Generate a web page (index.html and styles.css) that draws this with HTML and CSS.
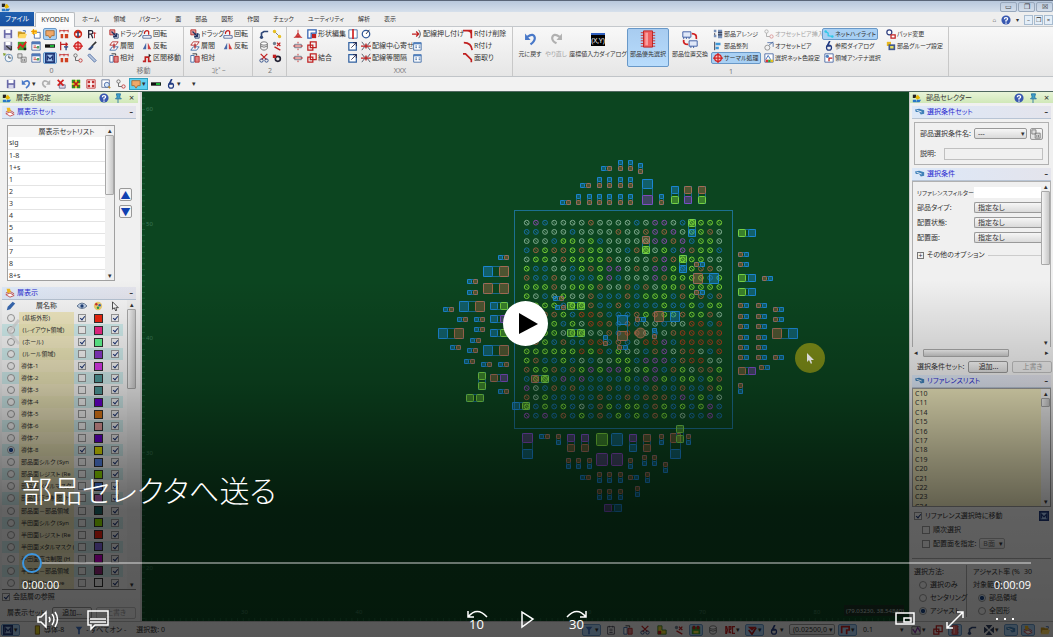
FILE: index.html
```
<!DOCTYPE html>
<html lang="ja">
<head>
    <meta charset="UTF-8">
    <meta name="viewport" content="width=device-width, initial-scale=1.0">
    <title>部品セレクタへ送る</title>
    <link rel="stylesheet" href="styles.css">
</head>
<body>
    <!-- icon sprite -->
    <svg class="sprite">
        <symbol id="i-app" viewBox="0 0 12 12"><path d="M1 2h4v4H1z" fill="#222"/><path d="M4 5l3-3 3 4-4 2z" fill="#e8b800"/><path d="M1 8h4v3H1zM6 8h5l-2 3H5z" fill="#2878c8"/></symbol>
        <symbol id="i-save" viewBox="0 0 12 12"><path d="M1 1h10v10H1z" fill="#6a6aa8"/><path d="M3 1h6v4H3z" fill="#fff"/><path d="M3 7h6v4H3z" fill="#d8d8ec"/></symbol>
        <symbol id="i-savex" viewBox="0 0 12 12"><path d="M1 1h10v10H1z" fill="#8888a8"/><path d="M3 1h6v4H3z" fill="#fff"/><path d="M4 6l6 5M10 6v5" stroke="#333" stroke-width="1.5"/></symbol>
        <symbol id="i-open" viewBox="0 0 12 12"><path d="M1 3h4l1 1h4v6H1z" fill="#c89820"/><path d="M3 6h9l-2 5H1z" fill="#ffd860"/><path d="M7 2h3v2" stroke="#3060b0" fill="none"/></symbol>
        <symbol id="i-new" viewBox="0 0 12 12"><path d="M4 4h7v7H4z" fill="#fff" stroke="#4060a0"/><path d="M1 1h6v5H1z" fill="#ffc830"/><path d="M3 0v7M0 3h7" stroke="#e89000"/></symbol>
        <symbol id="i-callout" viewBox="0 0 12 12"><path d="M1 2h10v6H8l-2 3-2-3H1z" fill="#f0a868" stroke="#a06830"/></symbol>
        <symbol id="i-grid" viewBox="0 0 12 12"><path d="M1 1h10v10H1z" fill="#f0e030"/><path d="M1 1h4v4H1zM7 1h4v4H7zM1 7h4v4H1zM7 7h4v4H7z" fill="#289028"/><path d="M3 3l6 6M9 3L3 9" stroke="#c01818" stroke-width="2"/></symbol>
        <symbol id="i-gridr" viewBox="0 0 12 12"><path d="M1 1h10v10H1z" fill="#fff" stroke="#c03030"/><path d="M2 2h3v3H2zM7 2h3v3H7zM2 7h3v3H2zM7 7h3v3H7z" fill="#c03030"/></symbol>
        <symbol id="i-chart" viewBox="0 0 12 12"><path d="M1 1h10v10H1z" fill="#40a030"/><path d="M1 9l3-5 3 3 4-6" stroke="#e02020" stroke-width="2" fill="none"/><path d="M8 8h3v3H8z" fill="#222"/></symbol>
        <symbol id="i-measure" viewBox="0 0 12 12"><path d="M1 2h10M1 1v3M6 1v3M11 1v3" stroke="#c02020" fill="none"/><path d="M2 6h3v5H2zM7 6h4v5H7z" fill="#d04020"/></symbol>
        <symbol id="i-red" viewBox="0 0 12 12"><circle cx="6" cy="6" r="5" fill="#d02818"/><path d="M3 5h6v3H3z" fill="#fff"/><path d="M5 3h2v7H5z" fill="#384878"/></symbol>
        <symbol id="i-rt" viewBox="0 0 12 12"><path d="M2 11V2h3q2 0 2 2t-2 2H2M5 6l2 5" stroke="#223" stroke-width="1.5" fill="none"/><path d="M9 4v7M7 5h4" stroke="#c02020"/></symbol>
        <symbol id="i-dim" viewBox="0 0 12 12"><path d="M2 1v10M2 4h8M8 2l2 2-2 2" stroke="#c02020" stroke-width="1.5" fill="none"/><path d="M6 7h5M8.500 7v4" stroke="#203878" stroke-width="1.5"/></symbol>
        <symbol id="i-bar" viewBox="0 0 12 12"><path d="M0 4h12v4H0z" fill="#111"/><path d="M6 5h5v2H6z" fill="#20d040"/></symbol>
        <symbol id="i-brush" viewBox="0 0 12 12"><path d="M11 1L6 6" stroke="#333" stroke-width="2"/><path d="M6 5l2 2-4 4-3-1z" fill="#304878"/></symbol>
        <symbol id="i-win" viewBox="0 0 12 12"><path d="M1 1h10v10H1z" fill="#fff" stroke="#4060a0"/><path d="M1 1h10v3H1z" fill="#5078b8"/><path d="M3 6h3M3 8h5" stroke="#c03030"/><path d="M7 6h3v3H7z" fill="#50a060"/></symbol>
        <symbol id="i-m" viewBox="0 0 12 12"><path d="M1 1h10v10H1z" fill="#a8c8f0" stroke="#203878" stroke-width="2"/><path d="M3 9V4l3 3 3-3v5" stroke="#203878" stroke-width="1.5" fill="none"/></symbol>
        <symbol id="i-clock" viewBox="0 0 12 12"><circle cx="7" cy="6" r="4.5" fill="#eef4fa" stroke="#5880a8"/><path d="M7 3v3h3" stroke="#333" fill="none"/><path d="M0 0l4 1-3 3z" fill="#80a030"/></symbol>
        <symbol id="i-gray" viewBox="0 0 12 12"><path d="M1 1h5v5H1zM5 5h6v6H5z" fill="#ddd" stroke="#777"/><path d="M7 7v3M9 7v3" stroke="#777"/></symbol>
        <symbol id="i-link" viewBox="0 0 12 12"><circle cx="3" cy="3" r="2" fill="none" stroke="#666"/><circle cx="9" cy="9" r="2" fill="none" stroke="#c03030"/><path d="M3 5v4h4" fill="none" stroke="#555"/></symbol>
        <symbol id="i-ruler" viewBox="0 0 12 12"><path d="M1 3l2-2 8 8-2 2z" fill="#b8c8e0" stroke="#4868a0"/></symbol>
        <symbol id="i-drag" viewBox="0 0 12 12"><path d="M1 1h6v6H1z" fill="#e8a0a0" stroke="#b02020"/><path d="M6 6h5v5H6z" fill="#fff" stroke="#204070"/><path d="M3 3l6 6M9 5v4H5" stroke="#203060" stroke-width="1.5" fill="none"/></symbol>
        <symbol id="i-layer" viewBox="0 0 12 12"><path d="M4 1h7L8 5H1z" fill="#fff" stroke="#b02020"/><path d="M4 7h7l-3 4H1z" fill="#fff" stroke="#3060a0"/><path d="M6 3v6" stroke="#b02020" stroke-width="1.5"/></symbol>
        <symbol id="i-rel" viewBox="0 0 12 12"><path d="M1 3h4v8H1z" fill="#fff" stroke="#3060a0"/><path d="M6 4h5v7H6z" fill="#e08080" stroke="#b02020"/><path d="M3 1h5v2" stroke="#222" fill="none"/></symbol>
        <symbol id="i-rot" viewBox="0 0 12 12"><path d="M1 8h10v3H1z" fill="#fff" stroke="#405890"/><path d="M3 6a3 3 0 015-3v4" stroke="#c02020" stroke-width="1.5" fill="none"/></symbol>
        <symbol id="i-flip" viewBox="0 0 12 12"><path d="M5 2v8H1z" fill="#4868a8"/><path d="M7 2v8h4z" fill="#d04040"/></symbol>
        <symbol id="i-sect" viewBox="0 0 12 12"><path d="M1 10h3V5h4v5h3" stroke="#c02020" stroke-width="2" fill="none"/><path d="M8 1l3 2-3 2z" fill="#222"/></symbol>
        <symbol id="i-route" viewBox="0 0 12 12"><path d="M3 10V5l3-2h5" stroke="#304878" stroke-width="2" fill="none"/><circle cx="3" cy="10" r="2" fill="#304878"/></symbol>
        <symbol id="i-node" viewBox="0 0 12 12"><path d="M2 2l8 8" stroke="#666"/><circle cx="3" cy="3" r="2" fill="#e8c020"/><circle cx="9" cy="9" r="2" fill="#e8c020"/></symbol>
        <symbol id="i-nodex" viewBox="0 0 12 12"><circle cx="3" cy="3" r="2" fill="#708090"/><path d="M6 2l4 4M10 2L6 6M3 7l7 4" stroke="#c02020" stroke-width="1.5"/></symbol>
        <symbol id="i-cyl" viewBox="0 0 12 12"><ellipse cx="6" cy="3" rx="4" ry="2" fill="#fff" stroke="#666"/><path d="M2 3v6q4 4 8 0V3M2 6q4 3 8 0" fill="none" stroke="#666"/></symbol>
        <symbol id="i-cut" viewBox="0 0 12 12"><path d="M2 1l7 7M10 1L3 8" stroke="#c02020" stroke-width="1.5"/><circle cx="3" cy="9" r="2" fill="none" stroke="#204080"/><circle cx="9" cy="9" r="2" fill="none" stroke="#204080"/></symbol>
        <symbol id="i-turn" viewBox="0 0 12 12"><circle cx="7" cy="7" r="3" fill="none" stroke="#223" stroke-width="2"/><path d="M1 2h4v4H1z" fill="#c02020"/></symbol>
        <symbol id="i-peg" viewBox="0 0 12 12"><path d="M1 10h10M6 1v9M3 9l3-4 3 4z" stroke="#c02020" fill="#d86060"/></symbol>
        <symbol id="i-pin" viewBox="0 0 12 12"><path d="M2 4h8v4H2z" fill="#fff" stroke="#667"/><path d="M6 1v2M6 9v2M0 6h12" stroke="#c02020"/></symbol>
        <symbol id="i-shape" viewBox="0 0 12 12"><path d="M1 1h10v4H5v6H1z" fill="#fff" stroke="#3060b0" stroke-width="1.5"/><path d="M6 6h5v5H6z" fill="#c02020"/></symbol>
        <symbol id="i-sq" viewBox="0 0 12 12"><path d="M4 1h7v7H4zM1 5h6v6H1z" fill="none" stroke="#c02020" stroke-width="1.5"/></symbol>
        <symbol id="i-split" viewBox="0 0 12 12"><path d="M1 1h10v10H1z" fill="#fff" stroke="#3060a0"/><path d="M6 0v12" stroke="#d02020" stroke-width="2"/></symbol>
        <symbol id="i-box" viewBox="0 0 12 12"><path d="M1 2h9v9H1z" fill="#fff" stroke="#3060a0" stroke-width="1.5"/><path d="M4 8l6-6M6 2h4v4" stroke="#224" fill="none"/></symbol>
        <symbol id="i-circ" viewBox="0 0 12 12"><circle cx="6" cy="6" r="4.5" fill="#fff" stroke="#305898" stroke-width="1.5"/><path d="M6 6l4-5" stroke="#223"/></symbol>
        <symbol id="i-squeeze" viewBox="0 0 12 12"><path d="M1 1l3 4h4l3-4M1 11l3-4h4l3 4" stroke="#404858" fill="none"/><path d="M0 6h12M6 3v6" stroke="#c02020" stroke-width="1.5"/></symbol>
        <symbol id="i-push" viewBox="0 0 12 12"><path d="M0 6h7M5 3l3 3-3 3" stroke="#c02020" stroke-width="1.5" fill="none"/><path d="M8 1q4 5 0 10" stroke="#345" fill="none"/></symbol>
        <symbol id="i-cal" viewBox="0 0 12 12"><path d="M2 2h9v9H2z" fill="#fff" stroke="#3060a0"/><path d="M2 2h9v2H2z" fill="#5080c0"/><path d="M4 6h2M8 6h2M4 8h2M8 8h2" stroke="#3060a0"/></symbol>
        <symbol id="i-fil" viewBox="0 0 12 12"><path d="M1 2q9 0 10 9" stroke="#c02020" stroke-width="2" fill="none"/></symbol>
        <symbol id="i-fildel" viewBox="0 0 12 12"><path d="M0 2h10v9M5 2q5 0 5 5" stroke="#c02020" stroke-width="2" fill="none"/></symbol>
        <symbol id="i-cham" viewBox="0 0 12 12"><path d="M0 1h3l7 7v3" stroke="#c02020" stroke-width="2" fill="none"/></symbol>
        <symbol id="i-undo" viewBox="0 0 12 12"><path d="M3 4q6-4 7 1 0 3-4 6" stroke="#4878c8" stroke-width="2" fill="none"/><path d="M1 1v6h5z" fill="#4878c8"/></symbol>
        <symbol id="i-redo" viewBox="0 0 12 12"><path d="M9 4Q3 0 2 5q0 3 4 5" stroke="#b0b0b0" stroke-width="2" fill="none"/><path d="M11 1v6H6z" fill="#b0b0b0"/></symbol>
        <symbol id="i-chip" viewBox="0 0 20 20"><path d="M2 3h16M2 6h16M2 9h16M2 12h16M2 15h16M2 18h16" stroke="#c83030"/><path d="M5 1h10v18H5z" fill="#f06060" stroke="#b82020"/><path d="M7 3h3v14H7z" fill="#f8a0a0"/></symbol>
        <symbol id="i-swap" viewBox="0 0 20 20"><path d="M2 2h9v6H2zM9 12h9v6H9z" fill="#e0e8f8" stroke="#3858a0"/><path d="M3 8v2M6 8v2M9 8v2M11 18v2M14 18v2" stroke="#3858a0"/><path d="M12 4q6 0 5 6M8 16q-6 0-5-5" stroke="#d02020" stroke-width="2" fill="none"/></symbol>
        <symbol id="i-arr" viewBox="0 0 12 12"><path d="M1 1h3v3H1zM1 7h3v3H1zM6 1h5v10H6z" fill="#7890b8"/><path d="M6 4h5M6 7h5M2 5v2" stroke="#223"/></symbol>
        <symbol id="i-align" viewBox="0 0 12 12"><path d="M2 1v10" stroke="#223"/><path d="M3 2h6v3H3zM3 7h4v3H3z" fill="#4098d8"/></symbol>
        <symbol id="i-therm" viewBox="0 0 12 12"><circle cx="6" cy="6" r="4" fill="#f8c0c0" stroke="#d02020" stroke-width="1.5"/><path d="M6 0v12M0 6h12" stroke="#d02020" stroke-width="1.5"/></symbol>
        <symbol id="i-via" viewBox="0 0 12 12"><circle cx="4" cy="8" r="3" fill="none" stroke="#888"/><path d="M4 2h7v5M6 5l5-4" stroke="#4868a0" fill="none"/></symbol>
        <symbol id="i-color" viewBox="0 0 12 12"><path d="M1 1h10v10H1z" fill="#fff" stroke="#4060a0"/><path d="M2 8l3-5 3 5" stroke="#3060b0" fill="none"/><path d="M2 8h3v3H2z" fill="#e03030"/><path d="M5 8h3v3H5z" fill="#30a030"/><path d="M8 8h3v3H8z" fill="#e8c020"/></symbol>
        <symbol id="i-net" viewBox="0 0 12 12"><path d="M2 3l3 2v3l5 1" stroke="#30c8e8" stroke-width="1.5" fill="none"/><circle cx="2" cy="3" r="1.5" fill="#30c8e8"/><circle cx="10" cy="9" r="1.5" fill="#30c8e8"/></symbol>
        <symbol id="i-ref" viewBox="0 0 12 12"><path d="M7 0L4 6h4" stroke="#223a80" stroke-width="2" fill="none"/><circle cx="6" cy="8" r="3" fill="none" stroke="#223a80" stroke-width="1.5"/></symbol>
        <symbol id="i-ant" viewBox="0 0 12 12"><path d="M1 1h10v10H1z" fill="#fff" stroke="#4060a0"/><circle cx="4" cy="4" r="2" fill="#5080c0"/><path d="M6 10V6h4" stroke="#c02020" stroke-width="1.5" fill="none"/></symbol>
        <symbol id="i-pad" viewBox="0 0 12 12"><circle cx="4" cy="4" r="3" fill="#fff" stroke="#304080" stroke-width="1.5"/><path d="M6 7h5v4H6z" fill="#fff" stroke="#c02020" stroke-width="1.5"/></symbol>
        <symbol id="i-group" viewBox="0 0 12 12"><path d="M1 1h5v5H1z" fill="#e8b820"/><path d="M3 4h8v7H3z" fill="#405890"/><path d="M5 6h4v3H5z" fill="#e8e060"/></symbol>
        <symbol id="i-del" viewBox="0 0 12 12"><path d="M4 7h7v4H4z" fill="#dde" stroke="#668"/><path d="M2 1l7 7M9 1L2 8" stroke="#d02020" stroke-width="2"/></symbol>
        <symbol id="i-zoom" viewBox="0 0 12 12"><path d="M1 1h9v9H1z" fill="#fff" stroke="#607090"/><circle cx="7" cy="7" r="3" fill="#d8e8f8" stroke="#4060a0"/><path d="M9 9l2 2" stroke="#c09030" stroke-width="2"/></symbol>
        <symbol id="i-help" viewBox="0 0 12 12"><circle cx="6" cy="6" r="5.5" fill="#3858b0"/><path d="M4 5q0-2 2-2t2 1.500-2 2V8M6 9v1.500" stroke="#fff" stroke-width="1.500" fill="none"/></symbol>
        <symbol id="i-tack" viewBox="0 0 12 12"><path d="M4 1h5l-1 4 2 2H3l2-2zM6 7v5" fill="#40a0c8" stroke="#2070a0"/></symbol>
        <symbol id="i-set" viewBox="0 0 12 12"><path d="M1 8l5-2 5 3-5 2z" fill="#fff" stroke="#c04040"/><path d="M1 6l5-2 5 3" stroke="#c04040" fill="none"/><path d="M2 1h4l1 4-4 1z" fill="#f0b820"/></symbol>
        <symbol id="i-sel" viewBox="0 0 12 12"><path d="M0 3l5-1 6 2v4L7 9 5 6 1 6z" fill="#4080b8"/><path d="M2 4l6 2" stroke="#fff"/></symbol>
        <symbol id="i-pen" viewBox="0 0 12 12"><path d="M8 1l3 2-6 7-4 1 1-4z" fill="#3868b0"/></symbol>
        <symbol id="i-eye" viewBox="0 0 12 12"><path d="M0 6q6-7 12 0-6 6-12 0z" fill="#c8d8ec" stroke="#506888"/><circle cx="6" cy="6" r="2" fill="#204078"/></symbol>
        <symbol id="i-pal" viewBox="0 0 12 12"><circle cx="6" cy="6" r="5" fill="#f0d070"/><circle cx="4" cy="4" r="1.500" fill="#d03030"/><circle cx="8" cy="5" r="1.500" fill="#3060c0"/><circle cx="6" cy="8" r="1.500" fill="#30a040"/></symbol>
        <symbol id="i-cur" viewBox="0 0 12 12"><path d="M3 1v9l2-2 2 4 1-1-1-3h3z" fill="#fff" stroke="#333"/></symbol>
        <symbol id="i-layerm" viewBox="0 0 12 12"><path d="M4 1h5v10H4z" fill="#e0d020" stroke="#806010"/></symbol>
        <symbol id="i-funnel" viewBox="0 0 12 12"><path d="M2 2h8L7 6v5H5V6z" fill="#4070c0"/></symbol>
        <symbol id="i-list" viewBox="0 0 12 12"><path d="M2 2h8v9H2z" fill="#fff" stroke="#445"/><path d="M4 5h4M4 7h4M4 9h4M4 1v2M8 1v2" stroke="#445"/></symbol>
        <symbol id="i-drc" viewBox="0 0 12 12"><path d="M1 2v8h1q2-4 0-8zM5 10V2h2v3L5 6l2 4M12 2H9v8h3" fill="none" stroke="#c02020" stroke-width="1.500"/></symbol>
        <symbol id="i-check" viewBox="0 0 12 12"><path d="M1 2h10L6 7z" fill="#c02020"/><path d="M2 6l4 5 5-8" stroke="#a01818" stroke-width="2" fill="none"/></symbol>
        <symbol id="i-board" viewBox="0 0 12 12"><path d="M1 2h10v9H1z" fill="#40a030"/><path d="M2 1h3v4H2zM7 1h3v4H7z" fill="#c02020"/><path d="M3 7h6v3H3z" fill="#f0e040"/></symbol>
        <symbol id="i-area" viewBox="0 0 12 12"><path d="M1 1h5v5h5v5H1z" fill="#e8d030" stroke="#308030"/><path d="M1 7h4v4H1z" fill="#c02020"/></symbol>
        <symbol id="i-cross" viewBox="0 0 12 12"><path d="M2 0h8L6 5zM2 12h8L6 7zM0 2v8l5-4zM12 2v8L7 6z" fill="#304060"/></symbol>
        <symbol id="i-tee" viewBox="0 0 12 12"><path d="M1 2h10v4H8v5M2 2v8" stroke="#c02020" stroke-width="2" fill="none"/></symbol>
        <symbol id="i-wave" viewBox="0 0 12 12"><path d="M1 2h10v9H1z" fill="#ddd" stroke="#666"/><path d="M2 5l3 4 3-6 3 5" stroke="#8030a0" stroke-width="1.500" fill="none"/></symbol>
    </svg>

    <header class="titlebar">
        <svg class="ic"><use href="#i-app"/></svg>
        <div class="winbtns">
            <button>▭</button><button>❐</button><button>☒</button>
        </div>
    </header>

    <nav class="tabs">
        <a href="#" class="file">ファイル</a>
        <a href="#" class="active">KYODEN</a>
        <a href="#">ホーム</a>
        <a href="#">領域</a>
        <a href="#">パターン</a>
        <a href="#">面</a>
        <a href="#">部品</a>
        <a href="#">図形</a>
        <a href="#">作図</a>
        <a href="#">チェック</a>
        <a href="#">ユーティリティ</a>
        <a href="#">解析</a>
        <a href="#">表示</a>
        <div class="tabs-right">
            <span>⌂</span>
            <svg class="ic"><use href="#i-help"/></svg>
            <span>▾</span>
            <div class="docbtns"><button>–</button><button>❐</button><button>×</button></div>
        </div>
    </nav>

    <section class="ribbon">
        <div class="group">
            <div class="cmds cmds-icons">
                <button class="cmd"><svg class="ic"><use href="#i-save"/></svg></button>
                <button class="cmd"><svg class="ic"><use href="#i-open"/></svg></button>
                <button class="cmd"><svg class="ic"><use href="#i-new"/></svg></button>
                <button class="cmd on"><svg class="ic"><use href="#i-callout"/></svg></button>
                <button class="cmd"><svg class="ic"><use href="#i-measure"/></svg></button>
                <button class="cmd"><svg class="ic"><use href="#i-red"/></svg></button>
                <button class="cmd"><svg class="ic"><use href="#i-rt"/></svg></button>
                <button class="cmd"><svg class="ic"><use href="#i-savex"/></svg></button>
                <button class="cmd"><svg class="ic"><use href="#i-chart"/></svg></button>
                <button class="cmd"><svg class="ic"><use href="#i-win"/></svg></button>
                <button class="cmd"><svg class="ic"><use href="#i-bar"/></svg></button>
                <button class="cmd"><svg class="ic"><use href="#i-dim"/></svg></button>
                <button class="cmd"><svg class="ic"><use href="#i-therm"/></svg></button>
                <button class="cmd"><svg class="ic"><use href="#i-brush"/></svg></button>
                <button class="cmd"><svg class="ic"><use href="#i-clock"/></svg></button>
                <button class="cmd"><svg class="ic"><use href="#i-gray"/></svg></button>
                <button class="cmd"><svg class="ic"><use href="#i-win"/></svg></button>
                <button class="cmd on"><svg class="ic"><use href="#i-m"/></svg></button>
                <button class="cmd"><svg class="ic"><use href="#i-measure"/></svg></button>
                <button class="cmd"><svg class="ic"><use href="#i-link"/></svg></button>
                <button class="cmd"><svg class="ic"><use href="#i-ruler"/></svg></button>
            </div>
            <h6>0</h6>
        </div>
        <div class="group">
            <div class="cmds cmds-move">
                <button class="cmd"><svg class="ic"><use href="#i-drag"/></svg>ドラッグ</button>
                <button class="cmd"><svg class="ic"><use href="#i-rot"/></svg>回転</button>
                <button class="cmd"><svg class="ic"><use href="#i-layer"/></svg>層間</button>
                <button class="cmd"><svg class="ic"><use href="#i-flip"/></svg>反転</button>
                <button class="cmd"><svg class="ic"><use href="#i-rel"/></svg>相対</button>
                <button class="cmd"><svg class="ic"><use href="#i-sect"/></svg>区間移動</button>
            </div>
            <h6>移動</h6>
        </div>
        <div class="group">
            <div class="cmds cmds-copy">
                <button class="cmd"><svg class="ic"><use href="#i-drag"/></svg>ドラッグ</button>
                <button class="cmd"><svg class="ic"><use href="#i-rot"/></svg>回転</button>
                <button class="cmd"><svg class="ic"><use href="#i-layer"/></svg>層間</button>
                <button class="cmd"><svg class="ic"><use href="#i-flip"/></svg>反転</button>
                <button class="cmd"><svg class="ic"><use href="#i-rel"/></svg>相対</button>
            </div>
            <h6>ｺﾋﾟｰ</h6>
        </div>
        <div class="group">
            <div class="cmds cmds-two">
                <button class="cmd"><svg class="ic"><use href="#i-route"/></svg></button>
                <button class="cmd"><svg class="ic"><use href="#i-node"/></svg></button>
                <button class="cmd"><svg class="ic"><use href="#i-cyl"/></svg></button>
                <button class="cmd"><svg class="ic"><use href="#i-nodex"/></svg></button>
                <button class="cmd"><svg class="ic"><use href="#i-cut"/></svg></button>
                <button class="cmd"><svg class="ic"><use href="#i-turn"/></svg></button>
            </div>
            <h6>2</h6>
        </div>
        <div class="group">
            <div class="cmds cmds-xxx">
                <button class="cmd"><svg class="ic"><use href="#i-peg"/></svg></button>
                <button class="cmd"><svg class="ic"><use href="#i-shape"/></svg>形状編集</button>
                <button class="cmd"><svg class="ic"><use href="#i-split"/></svg></button>
                <button class="cmd"><svg class="ic"><use href="#i-circ"/></svg></button>
                <button class="cmd"><svg class="ic"><use href="#i-push"/></svg>配線押し付け</button>
                <button class="cmd"><svg class="ic"><use href="#i-fildel"/></svg>R付け削除</button>
                <button class="cmd"><svg class="ic"><use href="#i-pin"/></svg></button>
                <button class="cmd"><svg class="ic"><use href="#i-sq"/></svg></button>
                <button class="cmd"><svg class="ic"><use href="#i-box"/></svg></button>
                <button class="cmd"><svg class="ic"><use href="#i-squeeze"/></svg>配線中心寄せ</button>
                <button class="cmd"><svg class="ic"><use href="#i-cal"/></svg></button>
                <button class="cmd"><svg class="ic"><use href="#i-fil"/></svg>R付け</button>
                <button class="cmd"><svg class="ic"><use href="#i-pin"/></svg></button>
                <button class="cmd"><svg class="ic"><use href="#i-sq"/></svg>結合</button>
                <button class="cmd"><svg class="ic"><use href="#i-box"/></svg></button>
                <button class="cmd"><svg class="ic"><use href="#i-squeeze"/></svg>配線等間隔</button>
                <button class="cmd"><svg class="ic"><use href="#i-cal"/></svg></button>
                <button class="cmd"><svg class="ic"><use href="#i-cham"/></svg>面取り</button>
            </div>
            <h6>XXX</h6>
        </div>
        <div class="group">
            <div class="bigrow">
                <button class="big"><svg><use href="#i-undo"/></svg>元に戻す</button>
                <button class="big dim"><svg><use href="#i-redo"/></svg>やり直し</button>
                <button class="big wide"><span class="xy">(X,Y)</span>座標値入力ダイアログ</button>
                <button class="big part on"><svg class="lg"><use href="#i-chip"/></svg>部品優先選択</button>
                <button class="big part"><svg class="lg"><use href="#i-swap"/></svg>部品位置交換</button>
                <div class="cmds cmds-parts">
                    <button class="cmd"><svg class="ic"><use href="#i-arr"/></svg>部品アレンジ</button>
                    <button class="cmd dim"><svg class="ic"><use href="#i-link"/></svg>オフセットビア挿入</button>
                    <button class="cmd on"><svg class="ic"><use href="#i-net"/></svg>ネットハイライト</button>
                    <button class="cmd"><svg class="ic"><use href="#i-pad"/></svg>パッド変更</button>
                    <button class="cmd"><svg class="ic"><use href="#i-align"/></svg>部品整列</button>
                    <button class="cmd"><svg class="ic"><use href="#i-via"/></svg>オフセットビア</button>
                    <button class="cmd"><svg class="ic"><use href="#i-ref"/></svg>参照ダイアログ</button>
                    <button class="cmd"><svg class="ic"><use href="#i-group"/></svg>部品グループ設定</button>
                    <button class="cmd on"><svg class="ic"><use href="#i-therm"/></svg>サーマル処理</button>
                    <button class="cmd"><svg class="ic"><use href="#i-color"/></svg>選択ネット色設定</button>
                    <button class="cmd"><svg class="ic"><use href="#i-ant"/></svg>領域アンテナ選択</button>
                </div>
            </div>
            <h6>1</h6>
        </div>
    </section>

    <div class="quickbar">
        <button class="cmd"><svg class="ic"><use href="#i-save"/></svg></button>
        <button class="cmd"><svg class="ic"><use href="#i-undo"/></svg>▾</button>
        <button class="cmd"><svg class="ic"><use href="#i-redo"/></svg></button>
        <button class="cmd"><svg class="ic"><use href="#i-del"/></svg></button>
        <button class="cmd"><svg class="ic"><use href="#i-grid"/></svg></button>
        <button class="cmd"><svg class="ic"><use href="#i-gridr"/></svg></button>
        <button class="cmd"><svg class="ic"><use href="#i-zoom"/></svg></button>
        <button class="cmd"><svg class="ic"><use href="#i-link"/></svg></button>
        <button class="cmd hot"><svg class="ic"><use href="#i-callout"/></svg>▾</button>
        <button class="cmd"><svg class="ic"><use href="#i-bar"/></svg></button>
        <button class="cmd"><svg class="ic"><use href="#i-ref"/></svg>▾</button>
        <button class="cmd more">▾</button>
    </div>

    <main class="work">
        <aside class="panel panel-left">
            <div class="dock"><svg class="ic"><use href="#i-app"/></svg><span>層表示設定</span><svg class="ic"><use href="#i-help"/></svg><svg class="ic"><use href="#i-tack"/></svg><button>×</button></div>
            <h5><svg class="ic"><use href="#i-set"/></svg>層表示セット<b>–</b></h5>
            <div class="setrow">
                <div class="setlist">
                    <table>
                        <thead><tr><th>層表示セットリスト</th></tr></thead>
                        <tbody>
                            <tr><td>sig</td></tr>
                            <tr><td>1-8</td></tr>
                            <tr><td>1+s</td></tr>
                            <tr><td>1</td></tr>
                            <tr><td>2</td></tr>
                            <tr><td>3</td></tr>
                            <tr><td>4</td></tr>
                            <tr><td>5</td></tr>
                            <tr><td>6</td></tr>
                            <tr><td>7</td></tr>
                            <tr><td>8</td></tr>
                            <tr><td>8+s</td></tr>
                        </tbody>
                    </table>
                    <div class="vbar"><i class="mid"></i></div>
                </div>
                <div class="updown"><button>▲</button><button>▼</button></div>
            </div>
            <h5><svg class="ic"><use href="#i-set"/></svg>層表示<b>–</b></h5>
            <div class="layerbox">
                <table class="layers">
                    <thead>
                        <tr>
                            <th><svg class="ic"><use href="#i-pen"/></svg></th>
                            <th>層名称</th>
                            <th><svg class="ic"><use href="#i-eye"/></svg></th>
                            <th><svg class="ic"><use href="#i-pal"/></svg></th>
                            <th><svg class="ic"><use href="#i-cur"/></svg></th>
                        </tr>
                    </thead>
                    <tbody id="layers"></tbody>
                </table>
                <div class="vbar"><i class="short"></i></div>
            </div>
            <label class="line"><input type="checkbox" checked>会話層の参照</label>
            <div class="btnrow"><span>層表示セット:</span><button>追加...</button><button disabled>上書き</button></div>
        </aside>

        <svg class="board" id="board" viewBox="142 92 767 529" preserveAspectRatio="xMidYMid slice"></svg>

        <aside class="panel panel-right">
            <div class="dock"><svg class="ic"><use href="#i-app"/></svg><span>部品セレクター</span><svg class="ic"><use href="#i-help"/></svg><svg class="ic"><use href="#i-tack"/></svg><button>×</button></div>
            <h5><svg class="ic"><use href="#i-sel"/></svg>選択条件セット<b>–</b></h5>
            <div class="condset">
                <label for="cond">部品選択条件名:</label>
                <span class="drop"><select id="cond"><option>---</option></select></span>
                <button><svg class="ic"><use href="#i-gray"/></svg></button>
                <label for="desc">説明:</label>
                <input type="text" id="desc" disabled>
            </div>
            <h5><svg class="ic"><use href="#i-sel"/></svg>選択条件<b>–</b></h5>
            <div class="condbox">
                <div class="conds">
                    <label for="flt" class="long">リファレンスフィルター:</label><input type="text" id="flt">
                    <label for="ptype">部品タイプ:</label><select id="ptype"><option>指定なし</option></select>
                    <label for="pstate">配置状態:</label><select id="pstate"><option>指定なし</option></select>
                    <label for="pside">配置面:</label><select id="pside"><option>指定なし</option></select>
                    <div class="opts"><span class="plus">+</span>その他のオプション</div>
                </div>
                <div class="vbar"><i class="half"></i></div>
            </div>
            <div class="hbar"><i></i></div>
            <div class="btnrow"><span>選択条件セット:</span><button>追加...</button><button disabled>上書き</button></div>
            <h5><svg class="ic"><use href="#i-sel"/></svg>リファレンスリスト<b>–</b></h5>
            <div class="reflist">
                <ul>
                    <li>C10</li>
                    <li>C11</li>
                    <li>C14</li>
                    <li>C15</li>
                    <li>C16</li>
                    <li>C17</li>
                    <li>C18</li>
                    <li>C19</li>
                    <li>C20</li>
                    <li>C21</li>
                    <li>C22</li>
                    <li>C23</li>
                    <li>C24</li>
                </ul>
                <div class="vbar"><i class="tiny"></i></div>
            </div>
            <div class="checks">
                <label class="line"><input type="checkbox" checked>リファレンス選択時に移動<svg class="ic"><use href="#i-m"/></svg></label>
                <label class="line in"><input type="checkbox">順次選択</label>
                <div class="line in"><label class="line"><input type="checkbox">配置面を指定:</label><span class="drop"><select disabled aria-label="配置面"><option>B面</option></select></span></div>
            </div>
            <div class="methods">
                <div>
                    <p>選択方法:</p>
                    <label class="line"><input type="radio" name="m">選択のみ</label>
                    <label class="line"><input type="radio" name="m">センタリング</label>
                    <label class="line"><input type="radio" name="m" checked>アジャスト</label>
                </div>
                <div>
                    <p class="rate"><label for="rate">アジャスト率 (%</label><input type="text" id="rate" value="30"></p>
                    <p>対象範囲:</p>
                    <label class="line"><input type="radio" name="r" checked>部品領域</label>
                    <label class="line"><input type="radio" name="r">全図形</label>
                </div>
            </div>
        </aside>
    </main>

    <footer class="status">
        <button class="cmd on"><svg class="ic"><use href="#i-m"/></svg>▾</button>
        <span class="cur"><svg class="ic"><use href="#i-layerm"/></svg>導体-8</span>
        <span><svg class="ic"><use href="#i-funnel"/></svg>- すべてオン -</span>
        <span>選択数: 0</span>
        <div class="tools">
            <button class="cmd on"><svg class="ic"><use href="#i-funnel"/></svg>▾</button>
            <button class="cmd"><svg class="ic"><use href="#i-list"/></svg></button>
            <button class="cmd"><svg class="ic"><use href="#i-rel"/></svg></button>
            <button class="cmd"><svg class="ic"><use href="#i-cut"/></svg></button>
            <button class="cmd"><svg class="ic"><use href="#i-area"/></svg></button>
            <button class="cmd"><svg class="ic"><use href="#i-nodex"/></svg></button>
            <button class="cmd on"><svg class="ic"><use href="#i-board"/></svg></button>
            <button class="cmd"><svg class="ic"><use href="#i-cyl"/></svg></button>
            <button class="cmd"><svg class="ic"><use href="#i-drc"/></svg>▾</button>
            <button class="cmd on"><svg class="ic"><use href="#i-check"/></svg>▾</button>
            <button class="cmd"><svg class="ic"><use href="#i-ref"/></svg>▾</button>
            <span class="drop"><select aria-label="グリッド"><option>(0.02500,0</option></select></span>
            <button class="cmd on"><svg class="ic"><use href="#i-tee"/></svg>▾</button>
            <span class="drop"><select class="flat" aria-label="線幅"><option>0.1</option></select></span>
            <button class="cmd"><svg class="ic"><use href="#i-wave"/></svg>▾</button>
            <button class="cmd"><svg class="ic"><use href="#i-sq"/></svg></button>
            <button class="cmd on"><svg class="ic"><use href="#i-chip"/></svg></button>
            <button class="cmd"><svg class="ic"><use href="#i-route"/></svg></button>
            <button class="cmd"><svg class="ic"><use href="#i-cross"/></svg>▾</button>
            <button class="cmd on"><svg class="ic"><use href="#i-sel"/></svg></button>
            <button class="cmd on"><svg class="ic"><use href="#i-set"/></svg></button>
            <button class="cmd"><svg class="ic"><use href="#i-open"/></svg></button>
        </div>
    </footer>

    <!-- video player controls over the recording -->
    <div class="player">
        <svg class="prev" viewBox="0 0 14 26"><path d="M12 1L2 13l10 12"/></svg>
        <button class="bigplay" aria-label="再生"><svg viewBox="0 0 45 45"><path d="M16 12v21l19-10z"/></svg></button>
        <h1>部品セレクタへ送る</h1>
        <input type="range" class="seek" min="0" max="9" value="0" aria-label="再生位置">
        <div class="times"><span>0:00:00</span><span>0:00:09</span></div>
        <div class="controls">
            <div class="side">
                <button aria-label="音量"><svg viewBox="0 0 24 24"><path d="M2 9h3l5-5v15l-5-5H2zM13 9q2 3 0 5M16 6q4 5 0 11M19 4q5 7 0 15"/></svg></button>
                <button aria-label="字幕"><svg viewBox="0 0 24 24"><path d="M2 3h20v14H9l-4 4v-4H2zM4 11h16M4 14h16"/></svg></button>
            </div>
            <div class="side">
                <button class="skip"><svg viewBox="0 0 24 9"><path d="M3 8q9-11 19 0M3 2v6h6"/></svg>10</button>
                <button aria-label="再生"><svg viewBox="0 0 24 24"><path d="M7 4v15l11-8z"/></svg></button>
                <button class="skip"><svg viewBox="0 0 24 9"><path d="M2 8q10-11 19 0M21 2v6h-6"/></svg>30</button>
            </div>
            <div class="side end">
                <button aria-label="ミニ表示"><svg viewBox="0 0 24 24"><path d="M3 5h18v11H3zM11 10h7v4h-7z"/></svg></button>
                <button aria-label="全画面"><svg viewBox="0 0 24 24"><path d="M4 20L20 4M14 4h6v6M4 14v6h6"/></svg></button>
                <button aria-label="その他"><svg viewBox="0 0 24 24"><path class="dots" d="M3 11h2M11 11h2M19 11h2"/></svg></button>
            </div>
        </div>
    </div>

    <script src="script.js"></script>
</body>
</html>
```
FILE: styles.css
```
* {
    box-sizing: border-box;
}
body {
    position: relative;
    display: flex;
    flex-direction: column;
    min-height: 100vh;
    margin: 0;
    overflow: hidden;
    background: #efefef;
    color: #333;
    font: 7px/12px "Noto Sans", "Noto Sans CJK JP", sans-serif;
    font-feature-settings: "palt";
    white-space: nowrap;
}
button, input, select {
    margin: 0;
    padding: 0;
    border: 0;
    background: none;
    color: inherit;
    font: inherit;
    font-feature-settings: inherit;
    border-radius: 0;
}
h1, h5, h6, p, ul {
    margin: 0;
    padding: 0;
    font-weight: normal;
    font-size: inherit;
    list-style: none;
}
table {
    border-collapse: collapse;
    width: 100%;
}
th, td {
    padding: 0;
    font-weight: normal;
}
.sprite {
    position: absolute;
    width: 0;
    height: 0;
}
.ic {
    width: 10px;
    height: 10px;
    flex: none;
    display: block;
}

/* title bar and tabs */
.titlebar {
    display: flex;
    justify-content: space-between;
    align-items: center;
    height: 12px;
    padding-left: 1px;
    border-top: 1px solid #5a6678;
    background: linear-gradient(#b8c8dc, #d6e0ec);
}
.winbtns, .docbtns {
    display: flex;
    gap: 1px;
}
.winbtns button {
    width: 17px;
    height: 10px;
    border: 1px solid #98a8bc;
    border-radius: 2px;
    line-height: 8px;
}
.tabs {
    display: flex;
    align-items: flex-end;
    height: 15px;
    border-bottom: 1px solid #c4c8cc;
    background: #eeeeee;
    font-size: 6px;
}
.tabs a {
    padding: 0 7px;
    line-height: 14px;
    color: #333;
    text-decoration: none;
}
.tabs .file {
    padding: 0 5px;
    margin-right: 1px;
    background: linear-gradient(#2060b0, #1850a0);
    color: #fff;
    font-size: 7px;
}
.tabs .active {
    padding: 0 5px;
    margin-bottom: -1px;
    border: 1px solid #b8bcc0;
    border-bottom: 0;
    border-radius: 2px 2px 0 0;
    background: #fbfbfb;
    font-size: 7px;
}
.tabs-right {
    display: flex;
    align-items: center;
    gap: 5px;
    margin-left: auto;
}
.docbtns button {
    width: 9px;
    height: 10px;
    border: 1px solid #a8bcd0;
    background: #e4eef8;
    line-height: 8px;
}

/* ribbon */
.ribbon {
    display: flex;
    height: 50px;
    border-bottom: 1px solid #c0c4c8;
    background: linear-gradient(#f8f8f8, #e6e6e6);
    font-size: 6px;
}
.group {
    display: flex;
    flex-direction: column;
    justify-content: space-between;
    padding: 1px 3px 0 4px;
    border-right: 1px solid #c8c8c8;
}
.group h6 {
    text-align: center;
    line-height: 10px;
    font-size: 7px;
    color: #777;
}
.cmds {
    display: grid;
    grid-auto-rows: 12px;
}
.cmds-icons { grid-template-columns: repeat(7, 14px); margin-left: -3px; }
.cmds-move { grid-template-columns: 33px 40px; }
.cmds-copy { grid-template-columns: 33px 28px; }
.cmds-two { grid-template-columns: 13px 13px; }
.cmds-xxx { grid-template-columns: 14px 41px 13px 51px 51px 48px; }
.cmds-parts { grid-template-columns: 51px 60px 62px 61px; }
.cmds-move, .cmds-copy, .cmds-xxx {
    font-size: 7px;
}
.cmd {
    display: flex;
    align-items: center;
    justify-self: start;
    gap: 1px;
    height: 12px;
    padding: 0 1px;
    border: 1px solid transparent;
}
.cmd.on {
    border-color: #6898c8;
    border-radius: 2px;
    background: #a8d0f4;
}
.dim {
    color: #a4a4a4;
}
.dim .ic {
    opacity: 0.5;
}
.bigrow {
    display: flex;
}
.big {
    display: flex;
    flex-direction: column;
    align-items: center;
    width: 26px;
    height: 39px;
    border: 1px solid transparent;
}
.big svg {
    width: 13px;
    height: 18px;
    margin-top: 1px;
}
.big svg.lg {
    width: 20px;
}
.big.wide {
    width: 58px;
}
.big.part {
    width: 42px;
}
.big.on {
    border-color: #6898c8;
    border-radius: 2px;
    background: linear-gradient(#a8ccf0, #b8dcfc);
}
.xy {
    margin: 4px 0 2px;
    border-top: 2px solid #3060c0;
    background: #000;
    color: #fff;
    font-size: 7px;
    line-height: 11px;
}
.quickbar {
    display: flex;
    align-items: center;
    gap: 1px;
    height: 15px;
    padding-left: 4px;
    border-bottom: 1px solid #506860;
    background: #f2f2f2;
}
.cmd.hot {
    border-color: #30a0c0;
    background: #60d0f0;
}
.more {
    margin-left: 6px;
}

/* work area */
.work {
    flex: 1;
    display: flex;
    height: 529px;
    min-height: 0;
}
.board {
    flex: 1;
    min-width: 0;
    height: 100%;
    background: #0c4520;
}
.panel {
    display: flex;
    flex-direction: column;
    flex: none;
    padding: 0 2px;
    background: #f0f0f0;
}
.panel-left {
    width: 142px;
    padding-right: 4px;
    border-right: 2px solid #d8d8d8;
}
.panel-right {
    width: 144px;
    border-left: 1px solid #ccc;
}
.dock {
    display: flex;
    align-items: center;
    gap: 4px;
    height: 11px;
    margin: 0 -2px 3px;
    padding: 0 2px;
    background: linear-gradient(#e8f4d8, #d0e8b8);
}
.dock span {
    flex: 1;
}
.dock button {
    width: 9px;
    font-size: 9px;
    line-height: 9px;
}
h5 {
    display: flex;
    align-items: center;
    gap: 2px;
    height: 13px;
    flex: none;
    padding: 0 3px;
    border-bottom: 1px solid #b8c4d4;
    background: linear-gradient(90deg, #dce8f8, #e4e4ec);
    color: #2828d0;
}
h5 b {
    margin-left: auto;
    color: #222;
}
.setrow {
    display: flex;
    align-items: center;
    gap: 4px;
    padding: 6px 4px 6px 5px;
}
.setlist {
    display: flex;
    flex: 1;
    height: 156px;
    border: 1px solid #a0a0a0;
    background: #fff;
    overflow: hidden;
}
.setlist th {
    height: 11px;
    line-height: 11px;
    padding-left: 20px;
    background: #f4f4f4;
}
.setlist td {
    height: 12px;
    line-height: 11px;
    padding-left: 1px;
    border-bottom: 1px solid #e4e4e4;
}
.updown {
    display: flex;
    flex-direction: column;
    gap: 4px;
}
.updown button {
    width: 13px;
    height: 13px;
    border: 1px solid #999;
    border-radius: 2px;
    background: #f4f4f4;
    color: #1040b0;
    font-size: 10px;
    line-height: 10px;
}
.vbar {
    display: flex;
    flex-direction: column;
    flex: none;
    width: 9px;
    background: #f0f0f0;
    text-align: center;
    line-height: 9px;
}
.vbar::before, .hbar::before {
    content: "▴";
}
.vbar::after, .hbar::after {
    content: "▾";
}
.vbar::after {
    margin-top: auto;
}
.vbar i, .hbar i {
    border: 1px solid #a8a8a8;
    border-radius: 1px;
    background: linear-gradient(90deg, #f4f4f4, #c8c8c8);
}
.mid { height: 60px; }
.short { height: 80px; }
.half { height: 74px; }
.tiny { height: 9px; }
.hbar {
    display: flex;
    align-items: center;
    height: 11px;
    padding: 0 2px;
}
.hbar::before { content: "◂"; }
.hbar::after { content: "▸"; margin-left: auto; }
.hbar i {
    width: 86px;
    height: 8px;
    margin-left: 5px;
    background: linear-gradient(#f4f4f4, #c8c8c8);
}
.layerbox {
    display: flex;
    gap: 4px;
    height: 290px;
    border-bottom: 1px solid #888;
    background: #f6f6f6;
    overflow: hidden;
}
.layers {
    flex: 1;
    table-layout: fixed;
}
.layers th {
    height: 12px;
    line-height: 12px;
}
.layers th .ic {
    margin: 0 auto;
}
.layers th:nth-child(1) { width: 17px; }
.layers th:nth-child(2) { width: 55px; }
.layers td {
    height: 12px;
    line-height: 10px;
    text-align: center;
    font-size: 6px;
}
.layers td:nth-child(2) {
    padding-left: 2px;
    background: #f0e8c0;
    overflow: hidden;
    text-align: left;
    white-space: pre;
}
.layers tbody tr:nth-child(even) {
    background: #d0ecec;
}
.layers tbody tr:nth-child(even) td:nth-child(2) {
    background: #ece6b8;
}
.layers input {
    display: block;
    margin: 0 auto;
}
.swatch {
    display: block;
    width: 9px;
    height: 9px;
    margin: 0 auto;
    border: 1px solid #333;
}
input[type=checkbox], input[type=radio] {
    appearance: none;
    position: relative;
    flex: none;
    width: 8px;
    height: 8px;
    border: 1px solid #9a9a9a;
    background: #f4f4f4;
}
input[type=radio] {
    border-radius: 50%;
}
input[type=checkbox]:checked::after {
    content: "";
    position: absolute;
    left: 2px;
    top: 0;
    width: 2px;
    height: 4px;
    border: solid #203878;
    border-width: 0 1px 1px 0;
    transform: rotate(40deg);
}
input[type=radio]:checked {
    background: radial-gradient(#204888 45%, #e0f0ff 55%);
}
.line {
    display: flex;
    align-items: center;
    gap: 3px;
    height: 14px;
}
.line > .ic {
    margin-left: auto;
}
.btnrow {
    display: grid;
    grid-template-columns: 1fr 40px 40px;
    align-items: center;
    gap: 4px;
    height: 17px;
    padding-left: 5px;
}
.btnrow button, .condset button {
    height: 12px;
    border: 1px solid #999;
    border-radius: 2px;
    background: linear-gradient(#f8f8f8, #dcdcdc);
    line-height: 10px;
}
.btnrow button:disabled {
    border-color: #c0c0c0;
    background: #eeeeee;
    color: #999;
}
select {
    appearance: none;
    width: 100%;
    height: 11px;
    padding-left: 3px;
    border: 1px solid #999;
    border-radius: 2px;
    background: linear-gradient(#f6f6f6, #dadada);
    line-height: 9px;
}
.drop {
    position: relative;
}
.drop::after {
    content: "▾";
    position: absolute;
    right: 2px;
    top: 0;
}
.condset {
    display: grid;
    grid-template-columns: auto 1fr 13px;
    align-items: center;
    gap: 3px;
    margin: 3px 2px;
    padding: 2px 5px;
    border: 1px solid #b0b0b0;
    height: 43px;
}
.condset input {
    grid-column: 2 / 4;
    height: 12px;
    margin-left: -30px;
    border: 1px solid #c0c0c0;
}
.condbox {
    display: flex;
    height: 166px;
    border: 1px solid #b0b0b0;
    border-bottom: 0;
}
.conds {
    flex: 1;
    min-width: 0;
    display: grid;
    grid-template-columns: 57px minmax(0, 1fr);
    grid-auto-rows: 15px;
    align-items: center;
    padding: 3px 0 0 4px;
}
.conds input {
    width: 100%;
    height: 11px;
    background: #fff;
}
.conds select {
    border-right: 0;
    border-radius: 2px 0 0 2px;
}
.conds .long {
    font-size: 6px;
}
.opts {
    grid-column: 1 / 3;
    display: flex;
    align-items: center;
    gap: 3px;
    margin-top: 5px;
}
.opts::after {
    content: "";
    flex: 1;
    border-top: 1px solid #ccc;
}
.plus {
    width: 7px;
    height: 7px;
    border: 1px solid #777;
    line-height: 5px;
    text-align: center;
}
.reflist {
    display: flex;
    height: 119px;
    border: 1px solid #999;
    background: #f2ecc0;
    overflow: hidden;
}
.reflist ul {
    display: flex;
    flex-direction: column;
    flex: 1;
    height: 122px;
    padding-left: 2px;
}
.reflist li {
    flex: 1;
    line-height: 9px;
}
.checks {
    padding: 2px 2px 7px;
    border-bottom: 1px solid #aaa;
}
.checks .line {
    height: 14px;
}
.in {
    padding-left: 8px;
}
.in .in, .in .line {
    padding-left: 0;
}
.in .drop {
    width: 26px;
}
.methods {
    display: grid;
    grid-template-columns: 55px 1fr;
    gap: 4px;
    padding-top: 6px;
    line-height: 13px;
}
.methods > div:first-child {
    border-right: 1px solid #aaa;
}
.methods > div {
    padding-left: 2px;
}
.methods .line {
    height: 13px;
    padding-left: 5px;
}
.rate {
    display: flex;
    gap: 4px;
}
.rate input {
    width: 26px;
}

/* status bar */
.status {
    display: flex;
    align-items: center;
    gap: 10px;
    height: 16px;
    padding: 0 1px;
    border-top: 1px solid #bbb;
    background: #efefef;
}
.status span {
    display: flex;
    align-items: center;
    gap: 2px;
}
.status .cur {
    margin-left: 2px;
}
.tools {
    display: flex;
    align-items: center;
    gap: 3px;
    margin-left: auto;
}
.tools .drop {
    width: 46px;
}
.tools .flat {
    border: 0;
    background: none;
}

/* player */
.player {
    position: absolute;
    inset: 0;
    display: flex;
    flex-direction: column;
    justify-content: flex-end;
    padding: 0 22px 5px;
    background: linear-gradient(transparent 44%, rgba(0,0,0,0.2) 60%, rgba(0,0,0,0.45) 72%, rgba(0,0,0,0.6) 80%, rgba(0,0,0,0.64));
    color: #fff;
}
.player svg {
    fill: none;
    stroke: #fff;
    stroke-width: 1.5;
}
.player .prev {
    position: absolute;
    left: 7px;
    top: 50%;
    width: 14px;
    height: 26px;
    stroke: rgba(190,190,190,0.7);
    stroke-width: 3;
}
.bigplay {
    position: absolute;
    left: calc(50% - 24px);
    top: calc(50% - 18px);
    width: 45px;
    height: 45px;
    border-radius: 50%;
    background: #fff;
}
.player .bigplay svg {
    display: block;
    fill: #000;
    stroke: none;
}
.player h1 {
    font: 300 30px/40px "Noto Sans CJK JP", sans-serif;
    font-feature-settings: "palt";
}
.seek {
    appearance: none;
    width: 100%;
    height: 20px;
    margin-top: 44px;
}
.seek::-webkit-slider-runnable-track {
    height: 2px;
    background: linear-gradient(90deg, transparent 20px, rgba(255,255,255,0.4) 20px);
}
.seek::-webkit-slider-thumb {
    appearance: none;
    width: 20px;
    height: 20px;
    margin-top: -9px;
    border: 2px solid #3c96e0;
    border-radius: 50%;
}
.times {
    display: flex;
    justify-content: space-between;
    margin-top: 5px;
    font: 11px/14px "Open Sans", sans-serif;
}
.controls {
    display: grid;
    grid-template-columns: 1fr auto 1fr;
    margin-top: 16px;
    padding: 0 14px;
}
.side {
    display: flex;
    gap: 26px;
}
.end {
    justify-content: flex-end;
}
.controls button {
    width: 24px;
    height: 24px;
}
.controls svg {
    display: block;
    width: 24px;
    height: 24px;
}
.controls .skip {
    font: 13px/13px "Open Sans", sans-serif;
}
.controls .skip svg {
    height: 9px;
}
.controls .dots {
    stroke-width: 2;
}
```
FILE: script.js
```
const NS = 'http://www.w3.org/2000/svg';
const board = document.getElementById('board');

function add(tag, attrs, text) {
    const el = document.createElementNS(NS, tag);
    for (const k in attrs) el.setAttribute(k, attrs[k]);
    if (text) el.textContent = text;
    board.appendChild(el);
    return el;
}

const colors = { w: '#7ca88c', p: '#8448a8', b: '#186ca0', g: '#74cc34', o: '#986040', r: '#a03c1c' };

// rulers, 10 mm = 114.5 units
let ticks = '';
for (let x = 146; x < 909; x += 5.72) ticks += `M${x} 621v-3`;
for (let y = 98; y < 621; y += 5.72) ticks += `M142 ${y}h3`;
add('path', { d: ticks, stroke: '#1c6038' });
for (let i = 0; i < 6; i++) add('text', { x: 241 + i * 114.5, y: 614, 'font-size': 6, fill: '#3c7858' }, String(30 + i * 10));
for (let i = 0; i < 5; i++) add('text', { x: 146, y: 111 + i * 114.7, 'font-size': 6, fill: '#3c7858' }, String(60 - i * 10));

// package outline and balls
add('rect', { x: 514.5, y: 210.5, width: 218, height: 218, fill: 'none', stroke: '#1c7090' });
const balls = [
    'wpbwwwwowwwwbwppwbgggg', 'bbwwwbwwwwowwopopwggow', 'wwwbggwgbwwwwwppopbggw', 'bogoogoggwwbogwgbpoggb',
    'wggwoggggowwwwopogggww', 'gbbwwbgogppwowppgbgoow', 'obbowbbbgpbwwwpoggggbg', 'gggowgggowwobowggogggg',
    'gwbwgwwobbbobgggbogobo', 'ggggbggobbobbbbgbbgbgg', 'gboogbrrobbbogoggoggow', 'ggbgbgwrrobobwwbwwrrbr',
    'goggwggwwobrowbworrrrr', 'gogbobbrrbobwrrpbrrrrr', 'ggggggrgrbgwwbopworwbr', 'gobbgbwbwwggbpppborrww',
    'oggobogpgppgwgpbogwoog', 'bggbpbpbbbbgbppgbggbgo', 'pwbobobbbobbbbobbobbog', 'owgbbbbbobbobooobpbgbw',
    'gbgbgbwbogbggbogbgbgpb', 'pbpbobgbobgbgbogbwbbpb'
];
balls.forEach((row, j) => {
    [...row].forEach((c, i) => {
        const x = 526.7 + i * 9.17, y = 222.7 + j * 9.19;
        add('circle', { cx: x, cy: y, r: 2.4, fill: 'none', stroke: colors[c], 'stroke-width': 1 });
        add('path', { d: `M${x - 1.5} ${y - 1.5}l3 3`, stroke: colors[c], 'stroke-width': 0.7 });
    });
});

const partColors = { b: '#1c88d8', o: '#b06c4c', g: '#7cd83c', p: '#8c48c8' };
// length, thickness, pad length
const sizes = { s: [11, 5, 5], m: [18, 8, 8], l: [26, 11, 10] };

function pad(x, y, w, h, c) {
    add('rect', { x: x + 0.5, y: y + 0.5, width: w - 1, height: h - 1, rx: 1, fill: partColors[c], 'fill-opacity': 0.4, stroke: partColors[c], 'stroke-opacity': 0.9 });
}

function part(cx, cy, dir, size, c) {
    const [len, th, p] = sizes[size];
    const x = Math.round(cx - (dir == 'h' ? len : th) / 2);
    const y = Math.round(cy - (dir == 'h' ? th : len) / 2);
    if (dir == 'h') {
        add('rect', { x: x + 0.5, y: y + 0.5, width: len - 1, height: th - 1, fill: 'none', stroke: '#186c90' });
        pad(x, y, p, th, c[0]);
        pad(x + len - p, y, p, th, c[1]);
    } else {
        add('rect', { x: x + 0.5, y: y + 0.5, width: th - 1, height: len - 1, fill: 'none', stroke: '#186c90' });
        pad(x, y, th, p, c[0]);
        pad(x, y + len - p, th, p, c[1]);
    }
}

// left side chips
[[606,168],[585,185],[565,202],[503,257],[472,281],[472,292],[448,309],[462,319],[479,319],[479,329],[475,340],[455,347],
 [472,350],[469,361],[486,364],[503,364],[503,391],[544,436],[585,477],[558,298],[560,307]].forEach(p => part(p[0], p[1], 'h', 's', 'bo'));
// top
[[620,165],[630,165],[640,168],[599,182],[609,182],[620,182],[630,182],[578,199],[589,199],[599,199],[609,199],[620,199],
 [630,199],[661,199],[605,340],[654,333]].forEach(p => part(p[0], p[1], 'v', 's', 'bo'));
// bottom
[[558,439],[568,463],[578,463],[589,463],[599,477],[609,477],[620,477],[647,477],[599,494],[609,494],[620,494],[637,491],
 [630,463],[644,460],[654,460],[665,467],[661,439],[688,439],[740,388]].forEach(p => part(p[0], p[1], 'v', 's', 'ob'));
// right
[[743,254],[743,264],[743,305],[743,316],[743,326],[743,337],[743,347],[743,357],[761,305],[761,316],[761,326],[761,337],
 [761,347],[761,357],[767,278],[778,309],[778,319],[778,357],[764,367],[633,477],[699,264],[699,292],[640,319],[622,347]].forEach(p => part(p[0], p[1], 'h', 's', 'ob'));

[[496,271,'h','l','bo'],[496,288,'h','l','oo'],[472,306,'h','l','bo'],[451,333,'h','l','bo'],[496,350,'h','l','bo'],
 [785,333,'h','l','ob'],[499,306,'h','m','bg'],[499,319,'h','m','bp'],[499,333,'h','m','bg'],[499,378,'h','m','op'],
 [475,398,'h','m','gg'],[482,381,'v','m','gg'],[540,379,'h','m','og'],[521,406,'h','m','bg'],[576,306,'h','m','gg'],
 [576,333,'h','m','gg'],[527,446,'v','l','pb'],[571,443,'v','m','po'],[585,443,'v','m','po'],[613,508,'h','m','pb'],
 [633,443,'v','m','pb'],[647,443,'v','m','oo'],[675,446,'v','l','ob'],[680,434,'v','m','gg'],[647,192,'v','l','bp'],
 [675,195,'v','m','bg'],[688,195,'v','m','op'],[702,195,'v','m','og'],[692,228,'v','m','gb'],[646,245,'v','m','og'],
 [683,264,'v','m','gb'],[706,278,'h','l','ob'],[667,316,'h','l','ob'],[622,328,'v','l','bo'],[747,233,'h','m','gb'],
 [747,278,'h','m','gb'],[747,292,'h','m','gb'],[747,371,'h','m','op']].forEach(p => part(...p));
pad(596, 433, 12, 13, 'g');
pad(611, 433, 12, 13, 'b');
pad(596, 453, 12, 13, 'p');
pad(611, 453, 12, 13, 'p');
add('circle', { cx: 640.5, cy: 333, r: 5, fill: '#a87050', 'fill-opacity': 0.5, stroke: '#a87050' });

// pointer
add('circle', { cx: 810, cy: 358, r: 15, fill: '#7c8c18' });
add('path', { d: 'M807 353v9l2-2 2 4 1-1-1-3h3z', fill: '#fff' });
add('rect', { x: 844, y: 605, width: 60, height: 11, fill: '#1c3024' });
add('text', { x: 846, y: 613, 'font-size': 6, fill: '#b8c8c0' }, '(79.03230, 38.54840)');

// layer table
const layers = [
    [' (基板外形)', 1, '#f02810'], [' (レイアウト領域)', 0, '#f02888'], [' (ホール)', 1, '#60f890'], [' (ルール領域)', 0, '#8838c8'],
    ['導体-1', 1, '#d838e8'], ['導体-2', 0, '#4f9a9a'], ['導体-3', 0, '#4f9a9a'], ['導体-4', 0, '#6800d0'],
    ['導体-5', 0, '#e07818'], ['導体-6', 0, '#e8a0a0'], ['導体-7', 0, '#6800d0'], ['導体-8', 1, '#e8e800'],
    ['部品面シルク (Syn', 0, '#5888f0'], ['部品面レジスト (Re', 0, '#90e000'], ['部品面メタルマスク (', 0, '#5080f0'],
    ['部品面高さ制限 (H', 0, '#c870c8'], ['部品面－部品領域', 0, '#206868'], ['半田面シルク (Syn', 0, '#90e000'],
    ['半田面レジスト (Re', 0, '#f02010'], ['半田面メタルマスク (', 0, '#8068e0'], ['半田面高さ制限 (H', 0, '#c800c8'],
    ['半田面－部品領域', 0, '#902878'], ['導体外 (Inactive', 0, '#f0f0f0']
];
document.getElementById('layers').innerHTML = layers.map(([name, on, color]) => `<tr>
    <td><input type="radio" name="layer" aria-label="${name}" ${name == '導体-8' ? 'checked' : ''}></td>
    <td>${name}</td>
    <td><input type="checkbox" aria-label="表示" ${on ? 'checked' : ''}></td>
    <td><span class="swatch" style="background:${color}"></span></td>
    <td><input type="checkbox" aria-label="選択" checked></td>
</tr>`).join('');
```
